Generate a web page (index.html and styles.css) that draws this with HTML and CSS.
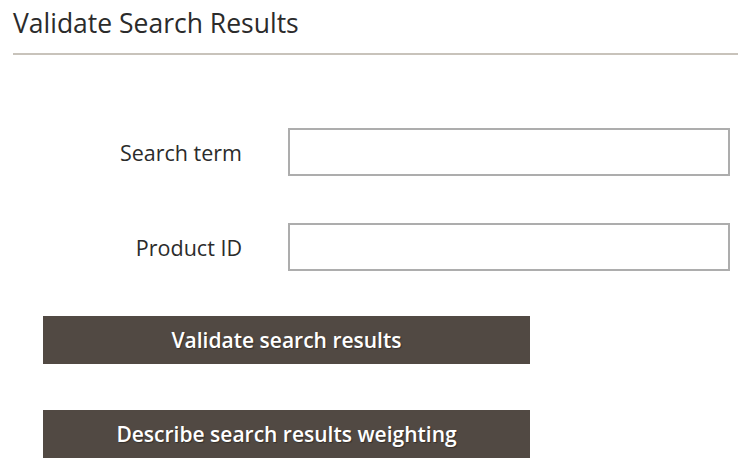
FILE: index.html
```html
<!DOCTYPE html>
<html lang="en">
<head>
    <meta charset="UTF-8">
    <title>Validate Search Results</title>
    <link rel="stylesheet" href="styles.css">
</head>
<body>
    <div class="page">
        <h1 class="title">Validate Search Results</h1>
        <form class="form">
            <div class="field">
                <label for="term">Search term</label>
                <input type="text" id="term">
            </div>
            <div class="field">
                <label for="pid">Product ID</label>
                <input type="text" id="pid">
            </div>
            <div class="actions">
                <button type="button">Validate search results</button>
                <button type="button">Describe search results weighting</button>
            </div>
        </form>
    </div>
</body>
</html>
```
FILE: styles.css
```css
body {
    margin: 0;
    font-family: "Open Sans", sans-serif;
    background-color: #ffffff;
    color: #2b2b2b;
}
.page {
    padding: 0 0 0 13px;
}
.title {
    margin: 0;
    padding-top: 6px;
    height: 47px;
    font-size: 26.5px;
    font-weight: 400;
    line-height: 34px;
    color: #2b2b2b;
    border-bottom: 2px solid #c8c3bb;
}
.form {
    padding-top: 73px;
}
.field {
    display: flex;
    align-items: center;
    margin-bottom: 47px;
}
.field label {
    width: 229px;
    text-align: right;
    font-size: 21.5px;
    color: #2b2b2b;
}
.field input {
    margin-left: 46px;
    width: 442px;
    height: 48px;
    box-sizing: border-box;
    border: 2px solid #adadad;
    border-radius: 0;
    font-size: 18px;
    padding: 0 10px;
}
.actions {
    margin-top: -2px;
    padding-left: 30px;
    display: flex;
    flex-direction: column;
    gap: 46px;
}
button {
    width: 487px;
    height: 48px;
    background-color: #514943;
    color: #ffffff;
    border: none;
    font-family: "Open Sans", sans-serif;
    font-size: 21px;
    font-weight: 600;
    text-shadow: 1px 1px 1px rgba(0, 0, 0, 0.35);
    cursor: pointer;
}
```
